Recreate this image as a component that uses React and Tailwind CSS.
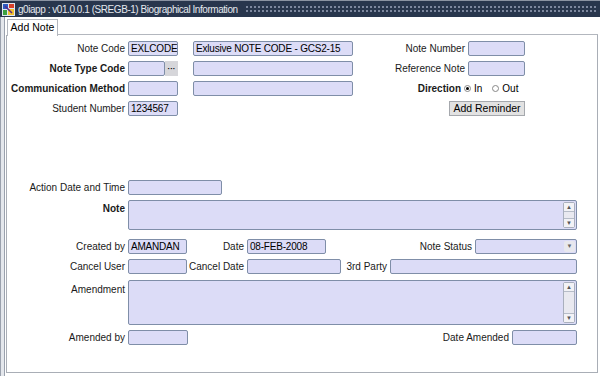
function Field({ w, value = "", className = "" }) {
  return (
    <div
      className={`h-[15px] shrink-0 overflow-hidden whitespace-nowrap rounded-[2px] border border-[#7f8ea8] bg-[#dcdcf7] pl-[2px] leading-[13px] tracking-[-0.2px] text-black ${className}`}
      style={{ width: w }}
    >
      {value}
    </div>
  );
}

function Label({ w, bold, children, className = "" }) {
  return (
    <div
      className={`shrink-0 pr-[3px] text-right text-[#1a1a1a] ${bold ? "font-bold" : ""} ${className}`}
      style={{ width: w }}
    >
      {children}
    </div>
  );
}

function Scroll() {
  return (
    <div className="absolute right-[1px] top-[1px] bottom-[1px] flex w-[12px] flex-col justify-between rounded-[2px] border border-[#a9afbd] bg-[#e9e9f0]">
      <div className="flex h-[9px] items-center justify-center border-b border-[#b6bcc8] bg-[#f2f2f6] text-[6px] leading-none text-[#555]">▲</div>
      <div className="flex h-[9px] items-center justify-center border-t border-[#b6bcc8] bg-[#f2f2f6] text-[6px] leading-none text-[#555]">▼</div>
    </div>
  );
}

function Radio({ on }) {
  return (
    <span className="relative inline-flex h-[7px] w-[7px] items-center justify-center rounded-full border border-[#888] bg-white">
      {on && <span className="h-[3px] w-[3px] rounded-full bg-black" />}
    </span>
  );
}

export default function App() {
  return (
    <div className="flex h-[376px] w-[600px] flex-col overflow-hidden bg-white font-['Liberation_Sans',Arial,sans-serif] text-[10px] text-black">
      {/* title bar */}
      <div className="flex h-[17px] shrink-0 items-center border-t border-[#8b93a2] bg-[#28364d]">
        <svg width="13" height="13" viewBox="0 0 13 13" className="ml-[2px] shrink-0">
          <rect x="0" y="0" width="13" height="13" fill="#dfe6f2" />
          <rect x="1" y="1" width="5" height="5" fill="#2b5cc4" />
          <rect x="7" y="1" width="5" height="4" fill="#d8402a" />
          <rect x="1" y="7" width="4" height="5" fill="#3ca040" />
          <rect x="6" y="6" width="6" height="6" fill="#f2c12e" />
          <path d="M3 3 L10 10" stroke="#5a2a8a" strokeWidth="1.5" />
        </svg>
        <span className="ml-[3px] whitespace-nowrap text-[10px] tracking-[-0.45px] text-[#e4e8ee]">
          g0iapp : v01.0.0.1 (SREGB-1) Biographical Information
        </span>
        <div className="ml-[7px] mr-[2px] h-[8px] flex-1 bg-[radial-gradient(circle,#7f8aa0_0.7px,transparent_1px)] bg-[length:4px_4px]" />
      </div>

      <div className="flex flex-1">
        {/* left frame strip */}
        <div className="w-[5px] shrink-0 border-l border-r border-[#9aa1ad] bg-[#e4e7ec]" />

        <div className="flex flex-1 flex-col pr-[2px] pb-[3px]">
          {/* tab row */}
          <div className="flex h-[18px] shrink-0 items-end">
            <div className="relative z-10 -mb-[1px] ml-[2px] flex h-[17px] w-[51px] items-center justify-center border-l border-r border-t border-[#b3b7be] bg-white text-[10.5px]">
              Add Note
            </div>
            <div className="h-[1px] flex-1 bg-[#b3b7be]" />
          </div>

          {/* panel */}
          <div className="ml-[1px] flex flex-1 flex-col border-b border-l border-r border-[#a9aeb6] pt-[6px]">
            {/* row 1 */}
            <div className="flex h-[15px] items-center">
              <Label w={121}>Note Code</Label>
              <Field w={50} value="EXLCODE" />
              <Field w={160} value="Exlusive NOTE CODE - GCS2-15" className="ml-[15px]" />
              <Label w={115}>Note Number</Label>
              <Field w={57} />
            </div>
            {/* row 2 */}
            <div className="mt-[5px] flex h-[15px] items-center">
              <Label w={121} bold>Note Type Code</Label>
              <Field w={37} />
              <div className="flex h-[15px] w-[13px] shrink-0 items-center justify-center bg-[#d6d6da] text-[8px] font-bold leading-none">
                ···
              </div>
              <Field w={160} className="ml-[15px]" />
              <Label w={115}>Reference Note</Label>
              <Field w={57} />
            </div>
            {/* row 3 */}
            <div className="mt-[5px] flex h-[15px] items-center">
              <Label w={121} bold>Communication Method</Label>
              <Field w={50} />
              <Field w={160} className="ml-[15px]" />
              <Label w={111} bold className="pr-[1px]">Direction</Label>
              <Radio on />
              <span className="ml-[3px]">In</span>
              <span className="ml-[10px]">
                <Radio />
              </span>
              <span className="ml-[3px]">Out</span>
            </div>
            {/* row 4 */}
            <div className="mt-[5px] flex h-[15px] items-center">
              <Label w={121}>Student Number</Label>
              <Field w={50} value="1234567" />
              <div className="ml-[271px] flex h-[15px] w-[76px] shrink-0 items-center justify-center border border-[#a5a8ad] bg-[#e2e2e2] text-[10.5px]">
                Add Reminder
              </div>
            </div>

            {/* action */}
            <div className="mt-[64px] flex h-[15px] items-center">
              <Label w={121}>Action Date and Time</Label>
              <Field w={94} />
            </div>
            {/* note */}
            <div className="mt-[5px] flex">
              <Label w={121} bold className="pt-[1px]">Note</Label>
              <div className="relative h-[30px] w-[449px] shrink-0 rounded-[2px] border border-[#7f8ea8] bg-[#dcdcf7]">
                <Scroll />
              </div>
            </div>
            {/* created */}
            <div className="mt-[9px] flex h-[15px] items-center">
              <Label w={121}>Created by</Label>
              <Field w={59} value="AMANDAN" />
              <Label w={60} className="pr-[2px]">Date</Label>
              <Field w={79} value="08-FEB-2008" />
              <Label w={149} className="pr-[2px]">Note Status</Label>
              <div className="relative h-[15px] w-[102px] shrink-0 rounded-[2px] border border-[#7f8ea8] bg-[#dcdcf7]">
                <div className="absolute right-[1px] top-[1px] bottom-[1px] flex w-[11px] items-center justify-center rounded-[2px] bg-[#e8e8ee] text-[6px] text-[#666]">
                  ▼
                </div>
              </div>
            </div>
            {/* cancel */}
            <div className="mt-[5px] flex h-[15px] items-center">
              <Label w={121}>Cancel User</Label>
              <Field w={59} />
              <Label w={60}>Cancel Date</Label>
              <Field w={94} />
              <Label w={49} className="pr-[2px]">3rd Party</Label>
              <Field w={187} />
            </div>
            {/* amendment */}
            <div className="mt-[6px] flex">
              <Label w={121} className="pt-[2px]">Amendment</Label>
              <div className="relative h-[45px] w-[449px] shrink-0 rounded-[2px] border border-[#7f8ea8] bg-[#dcdcf7]">
                <Scroll />
              </div>
            </div>
            {/* amended */}
            <div className="mt-[5px] flex h-[15px] items-center">
              <Label w={121}>Amended by</Label>
              <Field w={60} />
              <Label w={324} className="pr-[2px]">Date Amended</Label>
              <Field w={65} />
            </div>
          </div>
        </div>
      </div>
    </div>
  );
}
